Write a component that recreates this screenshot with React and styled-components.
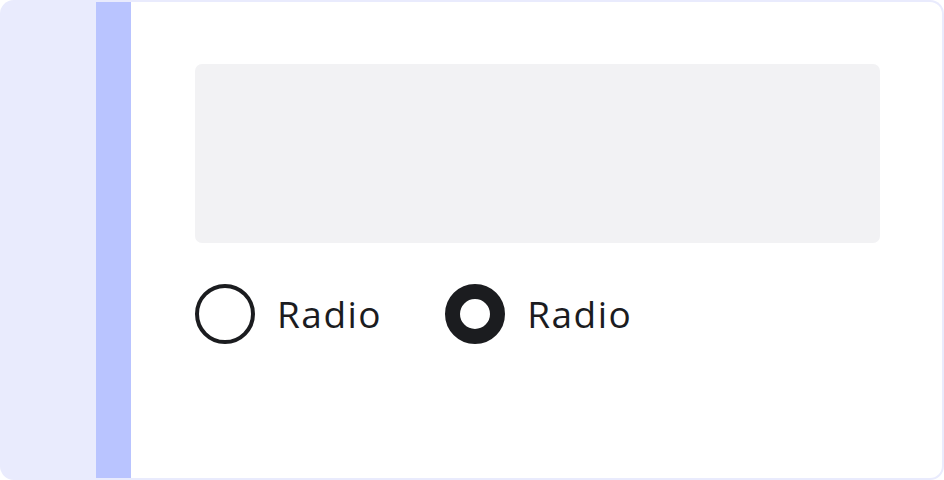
import React from 'react';
import styled, { createGlobalStyle } from 'styled-components';

const Global = createGlobalStyle`
  html, body { margin: 0; padding: 0; background: #ffffff; }
  body { font-family: "Open Sans", "Noto Sans", sans-serif; }
`;

const Frame = styled.div`
  width: 944px;
  height: 480px;
  box-sizing: border-box;
  display: flex;
  padding: 2px 2px 2px 96px;
  background: #e9ebfd;
  border-radius: 14px;
`;

const Strip = styled.div`
  width: 35px;
  background: #b9c4ff;
`;

const Panel = styled.div`
  flex: 1;
  background: #ffffff;
  border-radius: 0 12px 12px 0;
  padding: 62px 62px 0 64px;
`;

const Placeholder = styled.div`
  height: 179px;
  background: #f2f2f4;
  border-radius: 7px;
`;

const Row = styled.div`
  display: flex;
  align-items: center;
  gap: 63px;
  margin-top: 41px;
`;

const Option = styled.label`
  display: flex;
  align-items: center;
  gap: 22px;
  color: #1b1c1f;
  font-size: 37px;
  letter-spacing: 1.5px;
  line-height: 60px;
`;

const Circle = styled.span`
  width: 60px;
  height: 60px;
  box-sizing: border-box;
  border-radius: 50%;
  border: ${({ checked }) => (checked ? '15px' : '4px')} solid #1b1c1f;
  background: #ffffff;
`;

export default function App() {
  return (
    <>
      <Global />
      <Frame>
        <Strip />
        <Panel>
          <Placeholder />
          <Row>
            <Option>
              <Circle />
              Radio
            </Option>
            <Option>
              <Circle checked />
              Radio
            </Option>
          </Row>
        </Panel>
      </Frame>
    </>
  );
}
